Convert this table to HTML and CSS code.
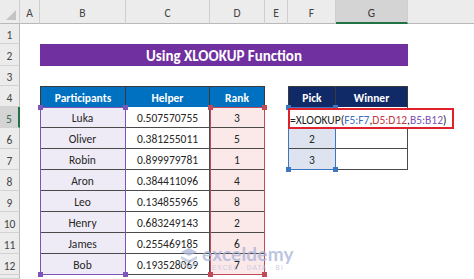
FILE: index.html
```html
<!DOCTYPE html>
<html>
<head>
<meta charset="utf-8">
<link rel="stylesheet" href="styles.css">
</head>
<body>
<div class="sheet">
  <!-- column headers -->
  <div class="ch corner"><span class="tri"></span></div>
  <div class="ch">A</div>
  <div class="ch">B</div>
  <div class="ch">C</div>
  <div class="ch">D</div>
  <div class="ch">E</div>
  <div class="ch">F</div>
  <div class="ch ch-sel">G</div>
  <div class="ch ch-last"></div>

  <!-- row headers -->
  <div class="rh r1">1</div>
  <div class="rh r2">2</div>
  <div class="rh r3">3</div>
  <div class="rh r4">4</div>
  <div class="rh r5 rh-sel">5</div>
  <div class="rh r6">6</div>
  <div class="rh r7">7</div>
  <div class="rh r8">8</div>
  <div class="rh r9">9</div>
  <div class="rh r10">10</div>
  <div class="rh r11">11</div>
  <div class="rh r12">12</div>
  <div class="rh r13"></div>

  <!-- title -->
  <div class="title">Using XLOOKUP Function</div>

  <!-- main table header -->
  <div class="th cB r4">Participants</div>
  <div class="th cC r4">Helper</div>
  <div class="th cD r4">Rank</div>

  <div class="td cB r5 nm">Luka</div><div class="td cC r5">0.507570755</div><div class="td cD r5 rk">3</div>
  <div class="td cB r6 nm">Oliver</div><div class="td cC r6">0.381255011</div><div class="td cD r6 rk">5</div>
  <div class="td cB r7 nm">Robin</div><div class="td cC r7">0.899979781</div><div class="td cD r7 rk">1</div>
  <div class="td cB r8 nm">Aron</div><div class="td cC r8">0.384411096</div><div class="td cD r8 rk">4</div>
  <div class="td cB r9 nm">Leo</div><div class="td cC r9">0.134855965</div><div class="td cD r9 rk">8</div>
  <div class="td cB r10 nm">Henry</div><div class="td cC r10">0.683249143</div><div class="td cD r10 rk">2</div>
  <div class="td cB r11 nm">James</div><div class="td cC r11">0.255469185</div><div class="td cD r11 rk">6</div>
  <div class="td cB r12 nm">Bob</div><div class="td cC r12">0.193528069</div><div class="td cD r12 rk">7</div>

  <!-- pick table -->
  <div class="th2 cF r4">Pick</div>
  <div class="th2 cG r4">Winner</div>
  <div class="td cF r5 pk"></div><div class="td cG r5"></div>
  <div class="td cF r6 pk">2</div><div class="td cG r6"></div>
  <div class="td cF r7 pk">3</div><div class="td cG r7"></div>

  <!-- range selections -->
  <div class="sel sel-purple"><i class="h tl"></i><i class="h tr"></i><i class="h bl"></i><i class="h br"></i></div>
  <div class="sel sel-red"><i class="h tl"></i><i class="h tr"></i><i class="h bl"></i><i class="h br"></i></div>
  <div class="sel sel-blue"><i class="h tl"></i><i class="h tr"></i><i class="h bl"></i><i class="h br"></i></div>

  <!-- in-cell editor -->
  <div class="editcell">
    <div class="editor">=XLOOKUP(<span class="fb">F5:F7</span>,<span class="fr">D5:D12</span>,<span class="fp">B5:B12</span>)</div>
  </div>

  <!-- watermark -->
  <div class="wm">
    <svg class="wm-logo" width="20" height="22" viewBox="0 0 20 22">
      <path d="M2 6 L10 2 L18 6 L10 10 Z" fill="#a9b6d6"/>
      <path d="M2 10 L10 14 L18 10 L18 13 L10 17 L2 13 Z" fill="#b7c2de"/>
      <path d="M2 16 L10 20 L18 16 L18 18 L10 22 L2 18 Z" fill="#c3cde5"/>
    </svg>
    <div class="wm-text">
      <div class="wm-big">exceldemy</div>
      <div class="wm-small">EXCEL · DATA · BI</div>
    </div>
  </div>
</div>
</body>
</html>
```

FILE: styles.css
```css
html, body {
  margin: 0;
  padding: 0;
  background: #ffffff;
  overflow: hidden;
}

.sheet {
  position: relative;
  width: 474px;
  height: 279px;
  display: grid;
  grid-template-columns: 20px 20px 86px 84px 55px 23px 48px 72px 1fr;
  grid-template-rows: 24px 20px 22px 20px 21px repeat(8, 21px) 1fr;
  font-family: "Carlito", "Lato", "Liberation Sans", sans-serif;
  font-size: 11px;
  color: #222;
  background: #fff;
}

/* column headers */
.ch {
  grid-row: 1;
  background: #ececec;
  border-right: 1px solid #cfcfcf;
  border-bottom: 1px solid #b9b9b9;
  box-sizing: border-box;
  display: flex;
  align-items: center;
  justify-content: center;
  padding-top: 3px;
  font-size: 11.5px;
  color: #444;
}
.ch-last { border-right: none; }
.ch-sel {
  background: #d4d4d4;
  border-bottom: 2px solid #217346;
  color: #333;
}
.corner {
  grid-column: 1;
  position: relative;
  background: #ececec;
}
.tri {
  position: absolute;
  right: 3px;
  bottom: 3px;
  width: 0;
  height: 0;
  border-left: 10px solid transparent;
  border-bottom: 10px solid #c4c4c4;
}

/* row headers */
.rh {
  grid-column: 1;
  background: #ececec;
  border-right: 1px solid #b9b9b9;
  border-bottom: 1px solid #d2d2d2;
  box-sizing: border-box;
  display: flex;
  align-items: center;
  justify-content: center;
  padding-top: 3px;
  font-size: 11.5px;
  color: #444;
}
.rh-sel {
  background: #d4d4d4;
  border-right: 2px solid #217346;
  color: #3b6b52;
}

/* row placement */
.r1 { grid-row: 2; }
.r2 { grid-row: 3; }
.r3 { grid-row: 4; }
.r4 { grid-row: 5; }
.r5 { grid-row: 6; }
.r6 { grid-row: 7; }
.r7 { grid-row: 8; }
.r8 { grid-row: 9; }
.r9 { grid-row: 10; }
.r10 { grid-row: 11; }
.r11 { grid-row: 12; }
.r12 { grid-row: 13; }
.r13 { grid-row: 14; }

/* column placement */
.cB { grid-column: 3; }
.cC { grid-column: 4; }
.cD { grid-column: 5; }
.cF { grid-column: 7; }
.cG { grid-column: 8; }

.title {
  grid-row: 3;
  grid-column: 3 / 9;
  background: #7030a0;
  color: #fff;
  font-weight: 700;
  font-size: 15px;
  display: flex;
  align-items: center;
  justify-content: center;
  padding-top: 1px;
}

.th, .th2 {
  color: #fff;
  font-weight: 700;
  font-size: 11.5px;
  display: flex;
  align-items: center;
  justify-content: center;
  padding-top: 2px;
  box-sizing: border-box;
  border-top: 1px solid #3a3a3a;
  border-right: 1px solid #3a3a3a;
}
.th { background: #0070c0; }
.th2 { background: #0f2a66; }
.th.cB, .th2.cF { border-left: 1px solid #3a3a3a; }

.td {
  display: flex;
  align-items: center;
  justify-content: center;
  padding-top: 2px;
  box-sizing: border-box;
  border-bottom: 1px solid #4a4a4a;
  border-right: 1px solid #4a4a4a;
  font-size: 11.5px;
  color: #262626;
}
.nm { background: #efebf6; }
.rk { background: #fbe9ea; }
.pk { background: #dde4ef; border-left: 1px solid #4a4a4a; }

/* range selection overlays */
.sel {
  position: relative;
  box-sizing: border-box;
  pointer-events: none;
}
.sel-purple {
  grid-column: 3;
  grid-row: 6 / 14;
  border: 1.5px solid #7b55b8;
}
.sel-red {
  grid-column: 5;
  grid-row: 6 / 14;
  border: 1.5px solid #c0495a;
}
.sel-blue {
  grid-column: 7;
  grid-row: 6 / 9;
  border: 1.5px solid #3f76c4;
}
.h {
  position: absolute;
  width: 5px;
  height: 5px;
}
.sel-purple .h { background: #7b55b8; }
.sel-red .h { background: #c0495a; }
.sel-blue .h { background: #3f76c4; }
.tl { left: -3px; top: -3px; }
.tr { right: -3px; top: -3px; }
.bl { left: -3px; bottom: -3px; }
.br { right: -3px; bottom: -3px; }

/* in-cell editor */
.editcell {
  grid-column: 7;
  grid-row: 6;
  position: relative;
}
.editor {
  position: absolute;
  left: 0;
  top: 1px;
  width: 166px;
  height: 21px;
  box-sizing: border-box;
  background: #fff;
  border: 2px solid #e0202a;
  display: flex;
  align-items: center;
  padding-left: 0;
  padding-top: 2px;
  font-size: 11.5px;
  color: #222;
  white-space: nowrap;
  z-index: 3;
}
.fb { color: #3d6fc0; }
.fr { color: #c0394a; }
.fp { color: #7d55b5; }

/* watermark */
.wm {
  position: absolute;
  left: 179px;
  top: 245px;
  display: flex;
  align-items: flex-start;
  gap: 3px;
  opacity: 0.75;
  pointer-events: none;
}
.wm-logo { margin-top: 1px; }
.wm-text { display: flex; flex-direction: column; align-items: center; }
.wm-big {
  font-family: "Lato", "Liberation Sans", sans-serif;
  font-size: 19px;
  font-weight: 700;
  color: #a8b3d8;
  line-height: 17px;
  letter-spacing: 0.2px;
}
.wm-small {
  font-family: "Liberation Sans", sans-serif;
  font-size: 6.5px;
  color: #b8c1dc;
  letter-spacing: 1px;
  line-height: 9px;
  margin-top: 1px;
}
```
